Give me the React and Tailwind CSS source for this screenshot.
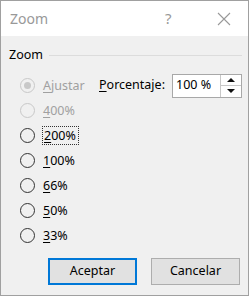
import React from 'react';

const options = [
  { key: 'fit', first: 'A', rest: 'justar', disabled: true, checked: true },
  { key: '400', first: '4', rest: '00%', disabled: true },
  { key: '200', first: '2', rest: '00%', focused: true },
  { key: '100', first: '1', rest: '00%' },
  { key: '66', first: '6', rest: '6%' },
  { key: '50', first: '5', rest: '0%' },
  { key: '33', first: '3', rest: '3%' },
];

const Radio = ({ disabled, checked }) => (
  <span
    className={
      'flex h-[15px] w-[15px] shrink-0 items-center justify-center rounded-full border ' +
      (disabled ? 'border-[#c8c8c8]' : 'border-[#333333]')
    }
  >
    {checked && <span className="h-[7px] w-[7px] rounded-full bg-[#c8c8c8]" />}
  </span>
);

const App = () => {
  return (
    <div
      className="flex h-[296px] w-[249px] flex-col border border-[#a0a0a0] bg-white text-[12.5px] text-black"
      style={{ fontFamily: '"Noto Sans", "Open Sans", sans-serif' }}
    >
      {/* barra de título */}
      <div className="flex h-[35px] items-center bg-white">
        <span className="pl-[9px] text-[14px] text-[#999999]">Zoom</span>
        <span className="ml-[117px] text-[15px] text-[#999999]">?</span>
        <svg className="ml-[45px]" width="14" height="14" viewBox="0 0 14 14">
          <path d="M1 1 L13 13 M13 1 L1 13" stroke="#999999" strokeWidth="1.1" />
        </svg>
      </div>

      <div className="flex flex-1 flex-col bg-[#f0f0f0] pl-[8px] pr-[6px]">
        {/* encabezado del grupo */}
        <div className="mt-[11px] flex h-[16px] items-center">
          <span className="leading-none">Zoom</span>
          <span className="ml-[6px] h-px flex-1 bg-[#dcdcdc]" />
        </div>

        <div className="mt-[10px] flex">
          <div className="flex w-[90px] shrink-0 flex-col">
            {options.map(o => (
              <div key={o.key} className="flex h-[25px] items-center pl-[11px]">
                <Radio disabled={o.disabled} checked={o.checked} />
                <span
                  className={
                    'ml-[8px] leading-[17px] ' +
                    (o.disabled ? 'text-[#a0a0a0] ' : '') +
                    (o.focused ? 'outline outline-1 outline-dotted outline-[#333] -ml-[1px] pl-[1px] pr-[2px]' : '')
                  }
                >
                  <span className="underline underline-offset-2">{o.first}</span>
                  {o.rest}
                </span>
              </div>
            ))}
          </div>

          <div className="flex h-[25px] flex-1 items-center">
            <span>
              <span className="underline underline-offset-2">P</span>orcentaje:
            </span>
            <div className="ml-auto flex h-[24px] w-[70px] border border-[#a8a8a8] bg-white">
              <span className="flex flex-1 items-center pl-[3px]">100 %</span>
              <div className="flex w-[21px] flex-col border-l border-[#c8c8c8]">
                <div className="flex flex-1 items-center justify-center border-b border-[#c8c8c8]">
                  <svg width="8" height="4" viewBox="0 0 8 4">
                    <path d="M0 4 L4 0 L8 4 Z" fill="#111" />
                  </svg>
                </div>
                <div className="flex flex-1 items-center justify-center">
                  <svg width="8" height="4" viewBox="0 0 8 4">
                    <path d="M0 0 L4 4 L8 0 Z" fill="#111" />
                  </svg>
                </div>
              </div>
            </div>
          </div>
        </div>

        {/* botones */}
        <div className="mt-[10px] mr-[2px] flex justify-end gap-[14px]">
          <button className="h-[27px] w-[89px] border-2 border-[#0078d7] bg-[#e1e1e1]">Aceptar</button>
          <button className="h-[27px] w-[89px] border border-[#adadad] bg-[#e1e1e1]">Cancelar</button>
        </div>
      </div>
    </div>
  );
};

export default App;
